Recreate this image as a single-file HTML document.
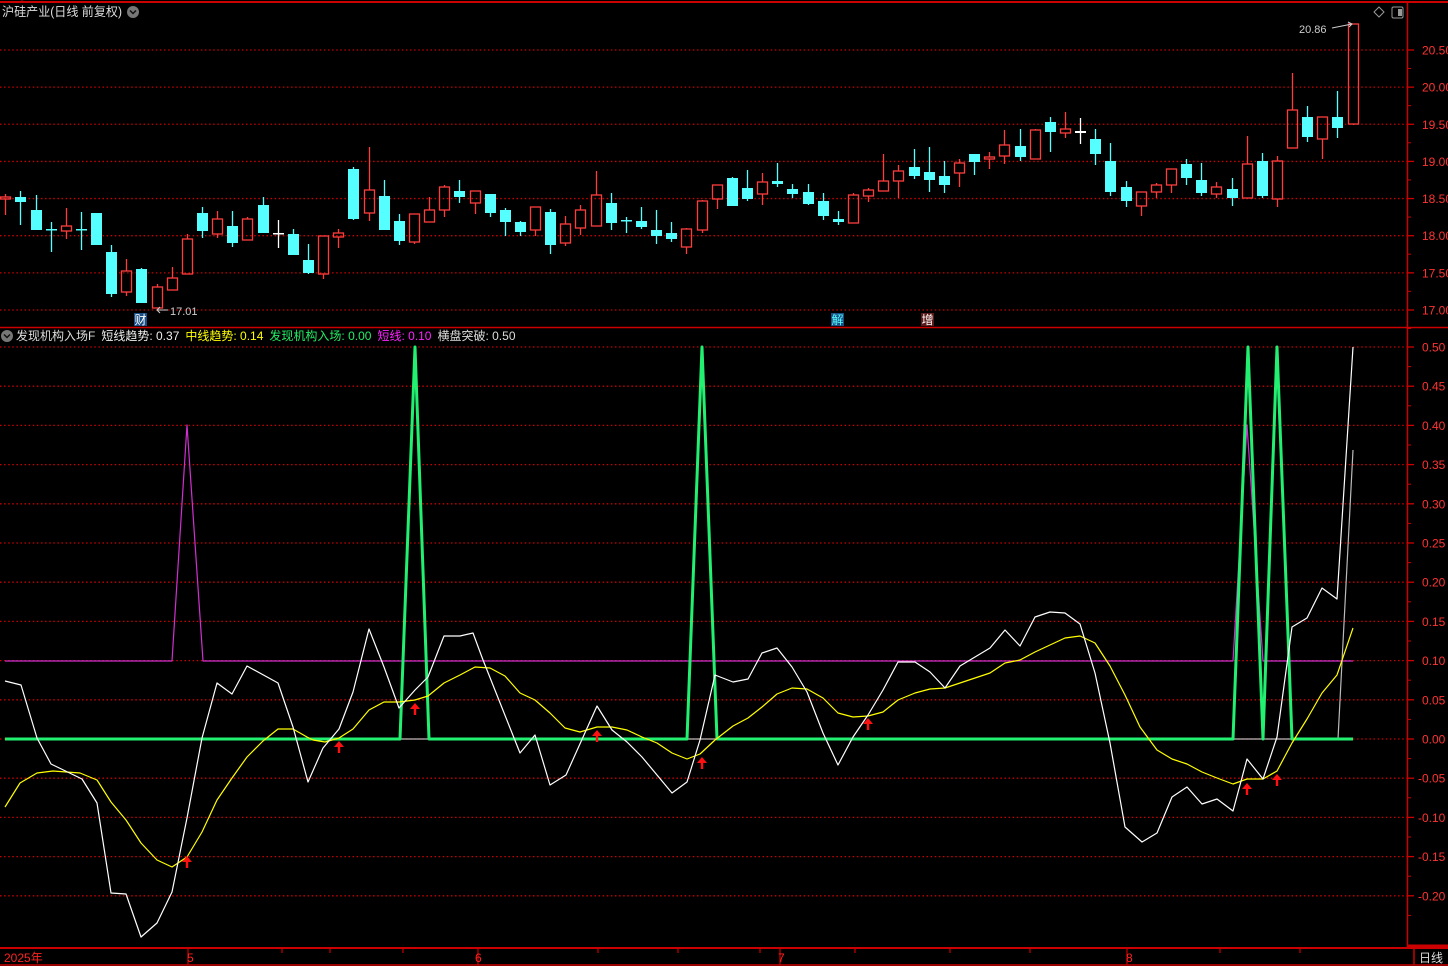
<!DOCTYPE html>
<html><head><meta charset="utf-8"><style>
html,body{margin:0;padding:0;background:#000;width:1448px;height:966px;overflow:hidden}
svg{display:block}
text{font-family:"Liberation Sans","Noto Sans CJK SC",sans-serif}
</style></head><body>
<svg id="s" width="1448" height="966" viewBox="0 0 1448 966" xmlns="http://www.w3.org/2000/svg">
<rect width="1448" height="966" fill="#000"/>
<g id="grid"></g>
<line x1="0" y1="2" x2="1448" y2="2" stroke="#c00" stroke-width="2"/>
<line x1="0" y1="327.5" x2="1448" y2="327.5" stroke="#c00" stroke-width="1.5"/>
<line x1="0" y1="948" x2="1448" y2="948" stroke="#c00" stroke-width="2"/>
<line x1="0" y1="965" x2="1448" y2="965" stroke="#c00" stroke-width="1.5"/>
<line x1="1407.5" y1="2" x2="1407.5" y2="948" stroke="#c00" stroke-width="1.5"/>
<line x1="1414" y1="965" x2="1414" y2="949" stroke="#c00" stroke-width="1.5"/>
<line x1="1407" y1="946" x2="1448" y2="946" stroke="#c00" stroke-width="3"/>
<line x1="22" y1="0" x2="22" y2="3" stroke="#c00"/>
<g id="ticks"></g>
<g id="candles"></g>
<g id="ind"></g>
<text x="2" y="16" font-size="12.5" fill="#ddd" textLength="120" lengthAdjust="spacingAndGlyphs">沪硅产业(日线 前复权)</text>
<circle cx="133" cy="12" r="6" fill="#777"/>
<path d="M130 10.5 L133 13.5 L136 10.5" stroke="#111" stroke-width="1.5" fill="none"/>
<path d="M1379 7 L1384 12 L1379 17 L1374 12 Z" stroke="#999" fill="none"/>
<rect x="1392" y="7" width="11" height="11" rx="1.5" stroke="#999" fill="none"/>
<rect x="1398" y="9" width="4" height="7" fill="#999"/>
<circle cx="7" cy="336" r="6" fill="#777"/>
<path d="M4 334.5 L7 337.5 L10 334.5" stroke="#111" stroke-width="1.5" fill="none"/>
<text y="340" font-size="12"><tspan x="16" fill="#ddd">发现机构入场F</tspan><tspan dx="6" fill="#eee">短线趋势: 0.37</tspan><tspan dx="6" fill="#ffff00">中线趋势: 0.14</tspan><tspan dx="6" fill="#22ee66">发现机构入场: 0.00</tspan><tspan dx="6" fill="#ff22ff">短线: 0.10</tspan><tspan dx="6" fill="#ddd">横盘突破: 0.50</tspan></text>
<text x="170" y="315" font-size="11" fill="#ccc">17.01</text>
<path d="M168 310 L157 310 M160 307 L157 310 L160 313" stroke="#ccc" fill="none"/>
<text x="1299" y="33" font-size="11" fill="#ccc">20.86</text>
<path d="M1332 28 L1352 24 M1348 22 L1352 24 L1349 27" stroke="#ccc" fill="none"/>
<rect x="134" y="313" width="13" height="13" fill="#1a4f86"/>
<text x="134.5" y="324" font-size="12" fill="#fff">财</text>
<rect x="831" y="313" width="13" height="13" fill="#1a4f86"/>
<text x="831.5" y="324" font-size="12" fill="#5ff">解</text>
<rect x="921" y="313" width="13" height="13" fill="#5a1a1a"/>
<text x="921.5" y="324" font-size="12" fill="#fff">增</text>
<text x="4" y="962" font-size="12" fill="#f22">2025年</text>
<text x="187" y="962" font-size="12" fill="#f22">5</text>
<text x="475" y="962" font-size="12" fill="#f22">6</text>
<text x="778" y="962" font-size="12" fill="#f22">7</text>
<text x="1126" y="962" font-size="12" fill="#f22">8</text>
<text x="1419" y="962" font-size="12" fill="#ddd">日线</text>
</svg>
<script>
var NS="http://www.w3.org/2000/svg";
function el(p,t,a){var e=document.createElementNS(NS,t);for(var k in a)e.setAttribute(k,a[k]);document.getElementById(p).appendChild(e);return e;}
var pl=["20.50","20.00","19.50","19.00","18.50","18.00","17.50","17.00"];
for(var i=0;i<8;i++){var y=50+i*37.14;
 el("grid","line",{x1:0,y1:y,x2:1407,y2:y,stroke:"#c00","stroke-width":1.3,"stroke-dasharray":"1.5 2.6"});
 el("grid","line",{x1:1407,y1:y,x2:1414,y2:y,stroke:"#c00","stroke-width":1.3});
 el("grid","line",{x1:1407,y1:y+18.5,x2:1411,y2:y+18.5,stroke:"#c00","stroke-width":1});
 var t=el("grid","text",{x:1422,y:y+4.5,"font-size":"12",fill:"#f33"});t.textContent=pl[i];}
var il=["0.50","0.45","0.40","0.35","0.30","0.25","0.20","0.15","0.10","0.05","0.00","-0.05","-0.10","-0.15","-0.20"];
for(var i=0;i<15;i++){var y=347+i*39.2;
 el("grid","line",{x1:0,y1:y,x2:1407,y2:y,stroke:"#c00","stroke-width":1.3,"stroke-dasharray":"1.5 2.6"});
 el("grid","line",{x1:1407,y1:y,x2:1414,y2:y,stroke:"#c00","stroke-width":1.3});
 el("grid","line",{x1:1407,y1:y+19.6,x2:1411,y2:y+19.6,stroke:"#c00","stroke-width":1});
 var t=el("grid","text",{x:(il[i][0]=="-"?1418:1422),y:y+4.5,"font-size":"12",fill:"#f33"});t.textContent=il[i];}
[188,282,330,403,478,598,678,760,780,855,950,1030,1127,1220,1300].forEach(function(x){el("ticks","line",{x1:x,y1:948,x2:x,y2:(x==188||x==478||x==780||x==1127)?965:953,stroke:"#c00","stroke-width":1.2});});
var C=[[5,194,197,199,215,"r"],[20,191,197,202,225,"c"],[36,195,210,230,230,"c"],[51,222,229,230,252,"c"],[66,208,226,231,239,"r"],[81,212,229,230,250,"c"],[96,213,213,245,245,"c"],[111,245,252,294,297,"c"],[126,259,271,292,296,"r"],[141,268,269,303,303,"c"],[157,284,287,308,308,"r"],[172,267,278,290,290,"r"],[187,234,239,274,274,"r"],[202,207,213,231,238,"c"],[217,211,219,234,238,"r"],[232,211,226,243,247,"c"],[247,217,219,240,240,"r"],[263,197,205,233,233,"c"],[278,220,233,234,248,"w"],[293,229,234,255,255,"c"],[308,244,260,273,274,"c"],[323,236,236,274,279,"r"],[338,229,233,237,248,"r"],[353,167,169,219,220,"c"],[369,147,190,213,221,"r"],[384,180,196,230,230,"c"],[399,214,221,241,245,"c"],[414,214,214,242,244,"r"],[429,197,210,222,222,"r"],[444,185,187,210,217,"r"],[459,180,191,197,203,"c"],[475,191,191,203,214,"r"],[490,194,194,213,217,"c"],[505,208,210,222,236,"c"],[520,221,222,232,236,"c"],[535,207,207,230,236,"r"],[550,209,212,245,254,"c"],[565,216,224,243,246,"r"],[580,205,210,228,235,"r"],[596,171,195,226,226,"r"],[611,193,203,223,230,"c"],[626,217,220,221,233,"c"],[641,207,221,227,229,"c"],[656,210,230,236,244,"c"],[671,222,233,239,242,"c"],[686,228,229,247,254,"r"],[702,200,201,230,233,"r"],[717,185,185,199,209,"r"],[732,177,178,206,206,"c"],[747,170,188,199,201,"c"],[762,173,182,194,205,"r"],[777,163,181,184,187,"c"],[792,184,189,194,198,"c"],[808,184,192,204,205,"c"],[823,193,201,216,220,"c"],[838,211,219,222,225,"c"],[853,193,195,223,223,"r"],[868,188,190,196,202,"r"],[883,154,181,191,191,"r"],[898,165,171,181,198,"r"],[914,149,167,176,179,"c"],[929,147,172,180,192,"c"],[944,161,176,185,193,"c"],[959,159,163,173,187,"r"],[974,154,154,162,175,"c"],[989,152,157,159,169,"r"],[1004,130,145,156,164,"r"],[1020,129,146,157,161,"c"],[1035,129,130,159,159,"r"],[1050,117,122,132,152,"c"],[1065,112,129,133,138,"r"],[1080,118,131,133,144,"w"],[1095,129,139,154,165,"c"],[1110,143,161,192,196,"c"],[1126,181,187,201,207,"c"],[1141,192,192,206,216,"r"],[1156,183,185,192,198,"r"],[1171,169,169,185,193,"r"],[1186,159,164,178,185,"c"],[1201,163,180,193,196,"c"],[1216,182,187,194,198,"r"],[1232,178,189,198,206,"c"],[1247,136,164,198,198,"r"],[1262,153,161,196,198,"c"],[1277,156,161,199,207,"r"],[1292,73,110,148,148,"r"],[1307,106,117,137,142,"c"],[1322,117,117,139,159,"r"],[1337,91,117,128,138,"c"],[1353,24,24,124,125,"r"]];
C.forEach(function(c){var x=c[0],col=c[5]=="c"?"#55ffff":(c[5]=="r"?"#ff3c3c":"#ffffff");
 if(c[5]=="r"){
  if(c[1]<c[2])el("candles","line",{x1:x+.5,y1:c[1],x2:x+.5,y2:c[2],stroke:col,"stroke-width":1.3});
  if(c[4]>c[3])el("candles","line",{x1:x+.5,y1:c[3],x2:x+.5,y2:c[4],stroke:col,"stroke-width":1.3});
  var h=c[3]-c[2];
  if(h<2)el("candles","rect",{x:x-5,y:c[2]-1,width:11,height:2,fill:col});
  else el("candles","rect",{x:x-4.5,y:c[2],width:10,height:h,fill:"none",stroke:col,"stroke-width":1.3});
 }else{
  el("candles","line",{x1:x+.5,y1:c[1],x2:x+.5,y2:c[4],stroke:col,"stroke-width":1.3});
  var h=Math.max(c[3]-c[2],1.5);
  el("candles","rect",{x:x-5,y:c[2],width:11,height:h,fill:col});
 }});
function pl2(pts,col,w){el("ind","polyline",{points:pts.map(function(p){return p.join(",")}).join(" "),fill:"none",stroke:col,"stroke-width":w,"stroke-linejoin":"round"});}
pl2([[5,661],[172,661],[187,425],[203,661],[1233,661],[1247,425],[1263,661],[1353,661]],"#d030d0",1.2);
pl2([[5,739],[1338,739],[1353,450]],"#bbbbbb",1.2);
pl2([[5,739],[400,739],[415,347],[429,739],[687,739],[702,347],[717,739],[1233,739],[1248,347],[1263,739],[1277,347],[1292,739],[1353,739]],"#22f070",3);
pl2([[5,807],[20,783],[37,773],[53,771],[80,773],[97,780],[111,802],[126,820],[141,843],[157,860],[172,867],[187,857],[202,832],[217,800],[232,778],[247,757],[263,741],[278,729],[293,729],[307,737],[313,740],[325,742],[339,738],[353,729],[369,710],[384,702],[399,702],[415,700],[428,696],[444,683],[460,675],[475,667],[490,668],[505,676],[520,693],[535,700],[550,713],[565,728],[580,732],[597,727],[612,727],[627,730],[642,737],[657,743],[672,753],[687,759],[700,754],[715,740],[733,726],[748,718],[762,707],[777,694],[792,688],[807,689],[823,698],[838,713],[853,717],[868,716],[883,712],[898,700],[915,693],[930,689],[945,688],[960,683],[990,673],[1005,663],[1020,660],[1035,652],[1050,645],[1065,638],[1080,636],[1095,643],[1110,666],[1125,695],[1140,727],[1157,750],[1172,759],[1187,764],[1202,772],[1217,778],[1233,784],[1247,779],[1263,779],[1277,771],[1292,743],[1307,719],[1322,693],[1337,675],[1353,628]],"#ffff00",1.2);
pl2([[5,681],[21,685],[37,738],[51,764],[82,779],[97,803],[111,893],[126,894],[141,937],[157,923],[172,892],[187,818],[202,738],[217,683],[232,694],[247,666],[278,683],[293,727],[308,782],[323,748],[339,729],[353,692],[369,629],[384,667],[399,708],[415,690],[428,677],[444,636],[460,636],[473,633],[483,660],[520,753],[535,735],[550,785],[566,775],[597,706],[612,730],[627,742],[642,757],[672,793],[687,782],[700,740],[715,675],[733,682],[748,679],[762,653],[777,648],[792,667],[807,692],[823,733],[838,765],[853,737],[868,715],[883,690],[898,662],[915,662],[930,672],[945,688],[960,666],[975,657],[990,648],[1005,630],[1020,646],[1035,617],[1050,612],[1065,613],[1080,624],[1095,673],[1110,743],[1125,827],[1142,842],[1157,833],[1172,797],[1187,787],[1202,804],[1217,799],[1233,811],[1247,759],[1263,779],[1277,737],[1292,627],[1307,618],[1322,588],[1337,599],[1353,347]],"#ffffff",1.2);
[[187,856],[339,741],[415,703],[597,730],[702,757],[868,718],[1247,783],[1277,774]].forEach(function(a){var x=a[0],y=a[1];
 el("ind","path",{d:"M"+x+" "+y+" L"+(x+5)+" "+(y+6)+" L"+(x+1.2)+" "+(y+6)+" L"+(x+1.2)+" "+(y+12)+" L"+(x-1.2)+" "+(y+12)+" L"+(x-1.2)+" "+(y+6)+" L"+(x-5)+" "+(y+6)+" Z",fill:"#ff1010"});});
</script>
</body></html>
